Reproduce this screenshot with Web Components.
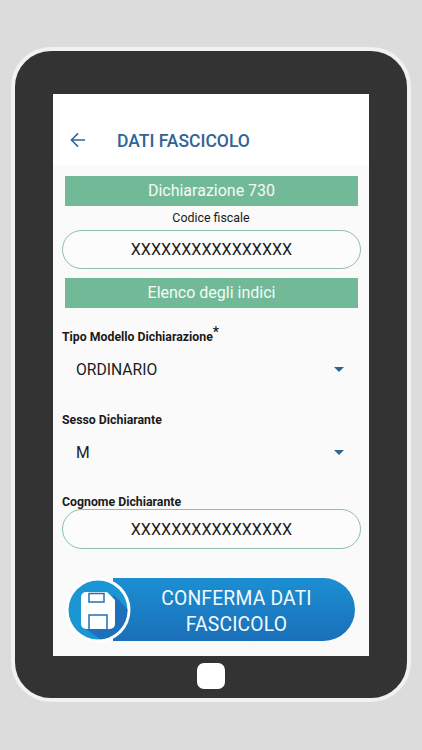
<!DOCTYPE html>
<html lang="it"><head><meta charset="utf-8"><title>Dati fascicolo</title>
<style>
html,body{margin:0;height:750px;overflow:hidden;background:#dcdcdc;font-family:Roboto,"Liberation Sans",sans-serif}
</style></head><body>
<tablet-frame>
  <app-header>DATI FASCICOLO</app-header>
  <div style="display:flex;flex-direction:column;flex:1;padding-top:11px">
    <green-bar>Dichiarazione 730</green-bar>
    <center-caption>Codice fiscale</center-caption>
    <pill-input>XXXXXXXXXXXXXXXX</pill-input>
    <green-bar style="margin-top:9px">Elenco degli indici</green-bar>
    <field-select label="Tipo Modello Dichiarazione" required value="ORDINARIO" style="margin-top:21px"></field-select>
    <field-select label="Sesso Dichiarante" value="M" style="margin-top:19px"></field-select>
    <field-label style="margin-top:18px">Cognome Dichiarante</field-label>
    <pill-input style="height:40px;margin-top:-1px">XXXXXXXXXXXXXXXX</pill-input>
    <save-button style="margin-top:29px">CONFERMA DATI<br>FASCICOLO</save-button>
  </div>
</tablet-frame>
<script>
function def(name, html, init){
  customElements.define(name, class extends HTMLElement{
    constructor(){super();this.attachShadow({mode:'open'}).innerHTML=html;}
    connectedCallback(){ if(init) init.call(this,this.shadowRoot); }
  });
}
def('tablet-frame',`<style>
:host{display:block;box-sizing:border-box;width:400px;height:655px;margin:47px 0 0 11px;border:4px solid #f1f1f1;border-radius:40px;background:#333;padding:43px 38px 0}
.screen{width:316px;height:562px;background:#fafafa;display:flex;flex-direction:column}
.home{width:28px;height:26px;border-radius:7px;background:#fff;margin:7px auto 0}
</style><div class="screen"><slot></slot></div><div class="home"></div>`);
def('app-header',`<style>
:host{display:flex;align-items:center;box-sizing:border-box;height:71px;padding:22px 0 0 17px;background:#fff;color:#2f6496;font-size:17.5px;font-weight:500;flex:none}
svg{width:16px;height:16px;margin-right:31px;flex:none;position:relative;top:-1px}
</style><svg viewBox="0 0 16 16" fill="none" stroke="#2f6496" stroke-width="1.5"><path d="M15 8H1.6M8 1.4 1.4 8 8 14.6"/></svg><slot></slot>`);
def('green-bar',`<style>
:host{display:block;box-sizing:border-box;width:293px;height:30px;margin-left:12px;background:#72ba97;color:#f4fbf7;font-size:16px;line-height:30px;text-align:center;flex:none}
</style><slot></slot>`);
def('center-caption',`<style>
:host{display:block;height:24px;line-height:23px;font-size:12.4px;color:#1a1a1a;text-align:center;flex:none}
</style><slot></slot>`);
def('pill-input',`<style>
:host{display:flex;align-items:center;justify-content:center;box-sizing:border-box;width:299px;height:39px;margin-left:9px;border:1px solid #8dbfa9;border-radius:20px;background:#fcfcfc;color:#1c1c1c;font-size:16.1px;flex:none}
</style><slot></slot>`);
def('field-label',`<style>
:host{display:block;margin-left:9px;font-size:12.3px;font-weight:700;color:#1a1a1a;line-height:16px;flex:none}
</style><slot></slot>`);
def('field-select',`<style>
:host{display:block;flex:none}
.l{margin-left:9px;font-size:12.3px;font-weight:700;color:#1a1a1a;line-height:16px;height:16px}
.l span{font-size:14px;line-height:0;font-weight:500;position:relative;top:-4px}
.r{display:flex;align-items:center;justify-content:space-between;height:48px;padding:0 25px 0 23px;font-size:15.7px;color:#1c1c1c}
i{width:0;height:0;border:5px solid transparent;border-top-color:#2f6496;border-bottom:0}
</style><div class="l"></div><div class="r"><span class="v"></span><i></i></div>`,function(s){
  s.querySelector('.l').innerHTML=this.getAttribute('label')+(this.hasAttribute('required')?'<span>*</span>':'');
  s.querySelector('.v').textContent=this.getAttribute('value');
});
def('save-button',`<style>
:host{display:block;position:relative;width:287px;height:64px;margin-left:15px;flex:none}
.p{box-sizing:border-box;height:63px;margin:0 0 0 45px;border-radius:0 32px 32px 0;background:linear-gradient(#1c8fd2,#1a6fb8);display:flex;align-items:center;justify-content:center;padding:4px 0 0 5px;color:#f3f9fd;font-size:19.3px;font-weight:400;letter-spacing:.2px;line-height:26px;text-align:center}
svg{position:absolute;left:0;top:0;width:64px;height:64px;overflow:visible}
</style><div class="p"><span><slot></slot></span></div>
<svg viewBox="0 0 64 64">
<defs><clipPath id="c"><circle cx="30" cy="32" r="29.5"/></clipPath></defs>
<circle cx="30" cy="32" r="32.500" fill="#fff"/>
<circle cx="30" cy="32" r="29.5" fill="#1b96d4"/>
<path clip-path="url(#c)" d="M46 17 64 36V64H36L15 49Z" fill="#1f70bb"/>
<path d="M18 14H39L47 22V46a5 5 0 0 1-5 5H18a5 5 0 0 1-5-5V19a5 5 0 0 1 5-5Z" fill="#fff"/>
<rect x="21" y="15.500" width="15" height="8.500" fill="#fff" stroke="#1f70bb" stroke-width="1.500"/>
<path d="M21 51V37H39V51" fill="#fff" stroke="#1f70bb" stroke-width="1.500"/>
</svg>`);
</script>
</body></html>
